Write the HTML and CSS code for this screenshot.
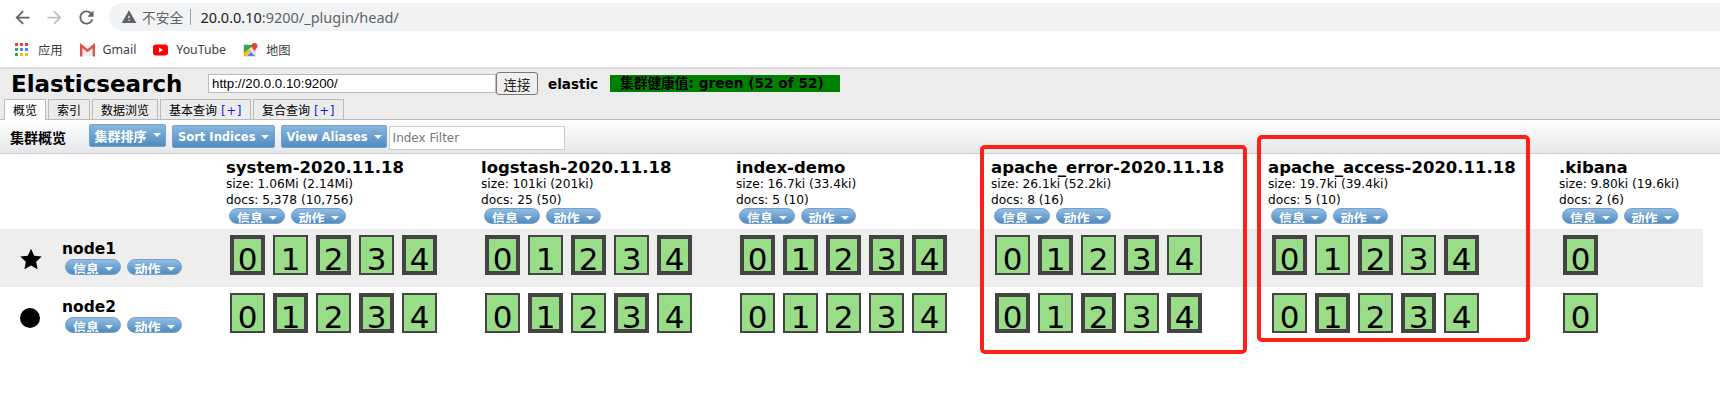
FILE: index.html
```html
<!DOCTYPE html>
<html lang="zh">
<head>
<meta charset="utf-8">
<title>elasticsearch-head</title>
<link rel="stylesheet" href="styles.css">
</head>
<body>
<div class="page">
  <div class="chrome">
    <svg class="nav-icon" viewBox="0 0 24 24"><path fill="#5f6368" d="M20 11H7.83l5.59-5.59L12 4l-8 8 8 8 1.41-1.41L7.83 13H20v-2z"/></svg>
    <svg class="nav-icon" viewBox="0 0 24 24"><path fill="#bdc1c6" d="M4 11h12.17l-5.59-5.59L12 4l8 8-8 8-1.41-1.41L16.17 13H4v-2z"/></svg>
    <svg class="nav-icon" viewBox="0 0 24 24"><path fill="#5f6368" d="M17.65 6.35C16.2 4.9 14.21 4 12 4c-4.42 0-7.99 3.58-7.99 8s3.57 8 7.99 8c3.73 0 6.84-2.55 7.73-6h-2.08c-.82 2.33-3.04 4-5.65 4-3.31 0-6-2.69-6-6s2.69-6 6-6c1.66 0 3.14.69 4.22 1.78L13 11h7V4l-2.35 2.35z"/></svg>
    <div class="omnibox">
      <svg class="warn-icon" viewBox="0 0 24 24"><path fill="#5f6368" d="M1 21h22L12 2 1 21zm12-3h-2v-2h2v2zm0-4h-2v-4h2v4z"/></svg>
      <span class="insecure">不安全</span>
      <span class="omni-sep"></span>
      <span class="url"><span class="url-host">20.0.0.10</span>:9200/_plugin/head/</span>
    </div>
  </div>
  <div class="bookmarks">
    <a class="bookmark">
      <svg class="bm-icon" viewBox="0 0 15 14">
        <rect x="0" y="0" width="3" height="3" fill="#ea4335"/><rect x="5" y="0" width="3" height="3" fill="#ea4335"/><rect x="10" y="0" width="3" height="3" fill="#ea4335"/>
        <rect x="0" y="5" width="3" height="3" fill="#34a853"/><rect x="5" y="5" width="3" height="3" fill="#4285f4"/><rect x="10" y="5" width="3" height="3" fill="#4285f4"/>
        <rect x="0" y="10" width="3" height="3" fill="#34a853"/><rect x="5" y="10" width="3" height="3" fill="#fbbc04"/><rect x="10" y="10" width="3" height="3" fill="#fbbc04"/>
      </svg>应用</a>
    <a class="bookmark">
      <svg class="bm-icon" viewBox="0 0 15 14"><path fill="#eeeeee" d="M1 2h13v11H1z"/><path fill="none" stroke="#d9534a" stroke-width="2.4" d="M1.2 13.5V2.6L7.5 7.6l6.3-5V13.5"/></svg>Gmail</a>
    <a class="bookmark">
      <svg class="bm-icon" viewBox="0 0 15 14"><rect y="1.5" width="15" height="11" rx="3" fill="#ff0000"/><path fill="#fff" d="M6 4.5l4 2.5-4 2.5z"/></svg>YouTube</a>
    <a class="bookmark">
      <svg class="bm-icon" viewBox="0 0 15 14"><path fill="#e4e4e4" d="M0 1h13v13H0z"/><path fill="#35a853" d="M1 2h10L1 10z"/><path fill="#fbbc04" d="M1 13v-3l5-4 2 2-5 5z"/><path fill="#4285f4" d="M4 13l4-4 4 4z"/><path fill="#ea4335" d="M11.5 0a3 3 0 0 1 3 3c0 2-2 3-3 5.500-1-2.500-3-3.500-3-5.500a3 3 0 0 1 3-3z"/></svg>地图</a>
  </div>
  <div class="head">
    <div class="head-top">
      <h1 class="brand">Elasticsearch</h1>
      <input class="conn-input" type="text" value="http://20.0.0.10:9200/">
      <button class="conn-btn" type="button">连接</button>
      <span class="cluster-name">elastic</span>
      <span class="health">集群健康值: green (52 of 52)</span>
    </div>
    <div class="tabs">
      <span class="tab active">概览</span>
      <span class="tab">索引</span>
      <span class="tab">数据浏览</span>
      <span class="tab">基本查询 <em class="plus">[+]</em></span>
      <span class="tab">复合查询 <em class="plus">[+]</em></span>
    </div>
  </div>
  <div class="bar">
    <span class="bar-title">集群概览</span>
    <span class="bar-btn first">集群排序<i class="caret"></i></span>
    <span class="bar-btn">Sort Indices<i class="caret"></i></span>
    <span class="bar-btn aliases">View Aliases<i class="caret"></i></span>
    <input class="filter" type="text" placeholder="Index Filter">
  </div>
  <div class="overview">
    <div class="row head-row">
      <div class="cell"></div>
      <div class="cell idx"><h2>system-2020.11.18</h2><p>size: 1.06Mi (2.14Mi)</p><p>docs: 5,378 (10,756)</p><div class="pills"><span class="pill">信息<i class="caret"></i></span><span class="pill">动作<i class="caret"></i></span></div></div>
      <div class="cell idx"><h2>logstash-2020.11.18</h2><p>size: 101ki (201ki)</p><p>docs: 25 (50)</p><div class="pills"><span class="pill">信息<i class="caret"></i></span><span class="pill">动作<i class="caret"></i></span></div></div>
      <div class="cell idx"><h2>index-demo</h2><p>size: 16.7ki (33.4ki)</p><p>docs: 5 (10)</p><div class="pills"><span class="pill">信息<i class="caret"></i></span><span class="pill">动作<i class="caret"></i></span></div></div>
      <div class="cell idx"><h2>apache_error-2020.11.18</h2><p>size: 26.1ki (52.2ki)</p><p>docs: 8 (16)</p><div class="pills"><span class="pill">信息<i class="caret"></i></span><span class="pill">动作<i class="caret"></i></span></div></div>
      <div class="cell idx"><h2>apache_access-2020.11.18</h2><p>size: 19.7ki (39.4ki)</p><p>docs: 5 (10)</p><div class="pills"><span class="pill">信息<i class="caret"></i></span><span class="pill">动作<i class="caret"></i></span></div></div>
      <div class="cell idx"><h2>.kibana</h2><p>size: 9.80ki (19.6ki)</p><p>docs: 2 (6)</p><div class="pills"><span class="pill">信息<i class="caret"></i></span><span class="pill">动作<i class="caret"></i></span></div></div>
    </div>
    <div class="row node-row odd">
      <div class="cell node">
        <svg class="node-mark" viewBox="0 0 24 24"><path d="M12 .8l3.5 7.6 8.2 1-6.1 5.6 1.6 8.2L12 19.1l-7.2 4.1 1.6-8.2L.3 9.400l8.2-1z"/></svg>
        <div class="node-info"><h3>node1</h3><div class="pills"><span class="pill">信息<i class="caret"></i></span><span class="pill">动作<i class="caret"></i></span></div></div>
      </div>
      <div class="cell shards"><b class="shard pri">0</b><b class="shard">1</b><b class="shard pri">2</b><b class="shard">3</b><b class="shard pri">4</b></div>
      <div class="cell shards"><b class="shard pri">0</b><b class="shard">1</b><b class="shard pri">2</b><b class="shard">3</b><b class="shard pri">4</b></div>
      <div class="cell shards"><b class="shard pri">0</b><b class="shard pri">1</b><b class="shard pri">2</b><b class="shard pri">3</b><b class="shard pri">4</b></div>
      <div class="cell shards"><b class="shard">0</b><b class="shard pri">1</b><b class="shard">2</b><b class="shard pri">3</b><b class="shard">4</b></div>
      <div class="cell shards"><b class="shard pri">0</b><b class="shard">1</b><b class="shard pri">2</b><b class="shard">3</b><b class="shard pri">4</b></div>
      <div class="cell shards"><b class="shard pri">0</b></div>
    </div>
    <div class="row node-row">
      <div class="cell node">
        <svg class="node-mark" viewBox="0 0 22 22"><circle cx="10" cy="12" r="10"/></svg>
        <div class="node-info"><h3>node2</h3><div class="pills"><span class="pill">信息<i class="caret"></i></span><span class="pill">动作<i class="caret"></i></span></div></div>
      </div>
      <div class="cell shards"><b class="shard">0</b><b class="shard pri">1</b><b class="shard">2</b><b class="shard pri">3</b><b class="shard">4</b></div>
      <div class="cell shards"><b class="shard">0</b><b class="shard pri">1</b><b class="shard">2</b><b class="shard pri">3</b><b class="shard">4</b></div>
      <div class="cell shards"><b class="shard">0</b><b class="shard">1</b><b class="shard">2</b><b class="shard">3</b><b class="shard">4</b></div>
      <div class="cell shards"><b class="shard pri">0</b><b class="shard">1</b><b class="shard pri">2</b><b class="shard">3</b><b class="shard pri">4</b></div>
      <div class="cell shards"><b class="shard">0</b><b class="shard pri">1</b><b class="shard">2</b><b class="shard pri">3</b><b class="shard">4</b></div>
      <div class="cell shards"><b class="shard">0</b></div>
    </div>
  </div>
  <div class="mark mark-error"></div>
  <div class="mark mark-access"></div>
</div>
</body>
</html>
```
FILE: styles.css
```css
* { box-sizing: border-box; }
html, body { margin: 0; padding: 0; background: #fff; overflow: hidden; }
body { font-family: "DejaVu Sans", "Noto Sans CJK SC", sans-serif; color: #000; }
.page { position: relative; width: 1720px; height: 409px; overflow: hidden; }

/* browser chrome */
.chrome { display: flex; align-items: center; height: 34px; padding: 3px 0 3px 12px; }
.nav-icon { width: 21px; height: 21px; margin-right: 11px; flex: none; }
.omnibox { display: flex; align-items: center; flex: 1; height: 28px; margin-left: 1px; padding-left: 12px; background: #f1f3f4; border-radius: 14px 0 0 14px; }
.warn-icon { width: 16px; height: 16px; flex: none; }
.insecure { margin-left: 5px; font: 13.8px "Noto Sans CJK SC", sans-serif; color: #5f6368; }
.omni-sep { width: 1px; height: 16px; margin: 0 9px 0 7px; background: #9aa0a6; }
.url { font: 14.5px "Noto Sans", sans-serif; color: #5f6368; }
.url-host { color: #202124; }

.bookmarks { display: flex; align-items: center; height: 33px; padding: 0 0 2px 15px; gap: 17px; }
.bookmark { display: flex; align-items: center; gap: 8px; font: 12.3px "Noto Sans", "Noto Sans CJK SC", sans-serif; color: #3c4043; }
.bm-icon { width: 15px; height: 14px; flex: none; }

/* head */
.head { height: 53px; background: #ececec; border-top: 2px solid #dcdcdc; border-bottom: 1px solid #bbb; display: flex; flex-direction: column; }
.head-top { display: flex; align-items: center; height: 30px; padding-left: 11px; }
.brand { margin: 0; width: 197px; font-size: 23px; font-weight: bold; line-height: 28px; }
.conn-input { width: 288px; height: 19px; margin: 0; padding: 0 3px; border: 1px solid #bbb; background: #fff; font: 13.3px "Liberation Sans", sans-serif; color: #000; }
.conn-btn { width: 42px; height: 23px; margin: 0; padding: 0; border: 1px solid #777; border-radius: 3px; background: #efefef; font: 13.5px "Noto Sans CJK SC", sans-serif; color: #222; }
.cluster-name { margin-left: 10px; width: 62px; font-size: 13.5px; font-weight: bold; }
.health { display: block; width: 230px; height: 17px; padding-left: 10px; background: #008000; font-size: 13.7px; font-weight: bold; line-height: 17px; white-space: nowrap; }
.tabs { display: flex; gap: 2px; padding-left: 4px; height: 21px; align-items: flex-end; }
.tab { display: block; height: 20px; padding: 0 8px; border: 1px solid #bbb; border-bottom: 0; background: #ececec; font: 12px/22px "DejaVu Sans", "Noto Sans CJK SC", sans-serif; white-space: nowrap; }
.tab.active { background: #fff; height: 21px; margin-bottom: -1px; position: relative; }
.plus { font-style: normal; color: #2020e0; letter-spacing: .6px; }

/* toolbar */
.bar { display: flex; align-items: center; height: 34px; padding-left: 10px; background: linear-gradient(#fff, #e5e7ea); border-bottom: 1px solid #ccc; }
.bar-title { width: 79px; font: bold 14px "Noto Sans CJK SC", sans-serif; }
.bar-btn { display: flex; align-items: center; height: 23px; padding: 0 5px; margin-right: 6px; border: 1px solid #7a9fc9; border-radius: 2px; background: linear-gradient(#88b7dd, #4f8cc0); color: #fff; font-size: 11.5px; font-weight: bold; white-space: nowrap; }
.bar-btn.first { padding: 0 4.5px; margin-bottom: 3px; font-size: 13px; }
.bar-btn.aliases { padding: 0 4px; }
.caret { display: inline-block; width: 0; height: 0; margin-left: 6px; border: 4px solid transparent; border-top: 4px solid #fff; border-bottom: 0; }
.filter { width: 176px; height: 24px; margin: 2px 0 0 -4px; padding: 0 3px; border: 1px solid #ccc; background: #fff; font: 12px "DejaVu Sans", sans-serif; }
.filter::placeholder { color: #777; opacity: 1; }

/* overview table */
.overview { width: 1703px; }
.row { display: grid; grid-template-columns: 226px 255px 255px 255px 277px 291px 144px; }
.head-row { height: 75px; padding-top: 5px; }
.cell { min-width: 0; }
.idx h2 { margin: 0; font-size: 16.5px; line-height: 17px; font-weight: bold; white-space: nowrap; }
.idx p { margin: 0; font-size: 12.2px; line-height: 16px; white-space: nowrap; }
.pills { display: flex; gap: 6px; margin: 0 0 0 3px; }
.pill { display: flex; align-items: flex-start; justify-content: center; width: 56px; height: 16px; padding-top: 2px; overflow: hidden; border: 1px solid #7a9fc9; border-radius: 8px; background: linear-gradient(#92bde2, #4f8cc0); color: #fff; font-size: 13px; font-weight: bold; line-height: 15px; white-space: nowrap; }
.pill + .pill { width: 55px; }
.pill .caret { margin: 5px 0 0 6px; }
.node-row { height: 58px; padding-top: 6px; }
.node-row.odd { background: #eee; }
.node { display: flex; padding-left: 20px; }
.node-mark { width: 22px; height: 22px; flex: none; margin-top: 13px; }
.node-info { margin-left: 20px; padding-top: 5px; }
.node-info h3 { margin: 0; font-size: 15.5px; line-height: 18px; font-weight: bold; }
.node-info .pills { margin-top: 1px; }
.shards { display: flex; gap: 8px; padding-left: 4px; }
.shard { display: flex; align-items: center; justify-content: center; width: 35px; height: 40px; padding-top: 8px; background: #99dd88; border: 2px solid #444; font-size: 31px; font-weight: normal; line-height: 1; }
.shard.pri { border-width: 4px; }

/* red annotation boxes */
.mark { position: absolute; border: 4px solid #ff2015; border-radius: 5px; }
.mark-error { left: 980px; top: 145px; width: 267px; height: 209px; }
.mark-access { left: 1257px; top: 135px; width: 273px; height: 207px; }
```
